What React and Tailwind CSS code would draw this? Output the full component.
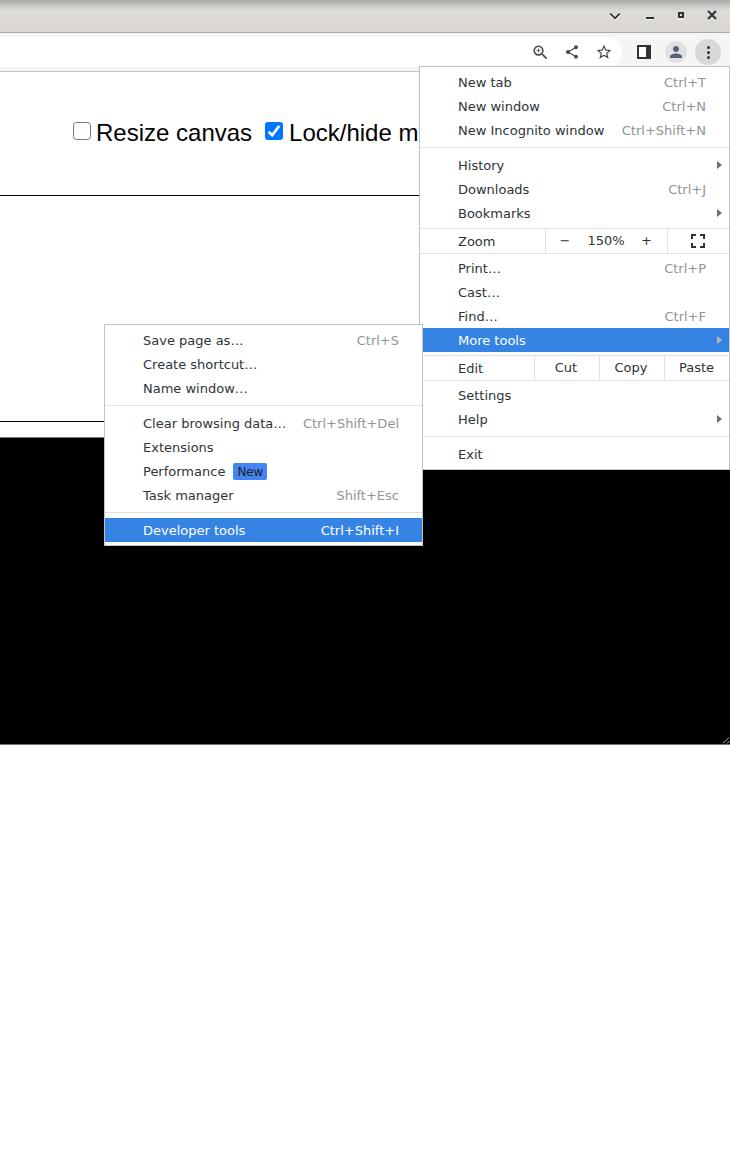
import React from "react";
import { MdZoomIn, MdShare, MdStarBorder, MdPerson } from "react-icons/md";

function Row({ label, shortcut, arrow, active, badge }) {
  return (
    <div
      className={`flex h-6 shrink-0 items-center pl-[38px] leading-[22px] ${
        active ? "bg-[#3584e4] text-white" : "text-[#2e3436]"
      }`}
    >
      <span className="pt-[2px]">{label}</span>
      {badge && (
        <span className="ml-2 h-[17px] rounded-[2px] bg-[#4285f4] px-1 text-[12px] leading-[18px] tracking-[-0.1px] text-[#202124]">
          {badge}
        </span>
      )}
      {shortcut && (
        <span className={`ml-auto pt-[2px] pr-[23px] ${active ? "text-white" : "text-[#929595]"}`}>{shortcut}</span>
      )}
      {arrow && (
        <svg className={`mr-[7px] ml-auto h-2 w-[5px] ${active ? "text-[#b8b6b4]" : "text-[#6a7070]"}`} viewBox="0 0 5 8">
          <path d="M0 0 5 4 0 8Z" fill="currentColor" />
        </svg>
      )}
    </div>
  );
}

function Separator() {
  return (
    <div className="h-[11px] shrink-0 pt-[5px]">
      <div className="h-px bg-[#e1e1e1]" />
    </div>
  );
}

function SplitRow({ label, children }) {
  return (
    <div className="mt-[3px] mb-[2px] flex h-[26px] shrink-0 border-y border-[#e1e1e1] leading-[26px]">
      <span className="flex-1 pl-[38px]">{label}</span>
      {children}
    </div>
  );
}

function WindowBar() {
  return (
    <div className="flex h-[33px] items-center justify-end border-b border-[#aaa9a7] bg-[linear-gradient(to_bottom,#a9a8a5_0px,#c5c3c0_5px,#dedad7_11px,#dad6d2_32px)] text-[#2e3436]">
      <svg className="h-[33px] w-[130px]" viewBox="0 0 130 33" fill="none" stroke="currentColor">
        <g stroke="#f6f5f4" strokeWidth="1.5" transform="translate(0 1)">
          <path d="M10 14 15 18.6 20 14M46 18h8M77 18h6M107.5 19l8-8M107.5 11l8 8" transform="translate(0 .3)" />
        </g>
        <path d="M10.3 13.6 15 18.3 19.7 13.6" strokeWidth="1.8" />
        <path d="M46 18h8" strokeWidth="2" />
        <path d="M79 13h4v4h-4z" strokeWidth="2" />
        <path d="m108 11 8 8M116 11l-8 8" strokeWidth="2.2" />
      </svg>
    </div>
  );
}

function Toolbar() {
  return (
    <div className="flex h-[39px] border-b border-[#c5c2bc] bg-[#f6f5f4] pt-1 text-[#4a4a4a]">
      <div className="flex h-[30px] w-[622px] items-center justify-end rounded-r-[15px] bg-white pr-[9px]">
        <MdZoomIn className="mr-[14px] size-[19px]" />
        <MdShare className="mr-[15px] size-[16px]" />
        <MdStarBorder className="size-[18px]" />
      </div>
      <svg className="mt-2 ml-[15px] h-[14px] w-[14px]" viewBox="0 0 14 14">
        <path d="M0 0h14v14H0z" fill="#2e3436" />
        <path d="M2 2h7v10H2z" fill="#fff" />
      </svg>
      <div className="mt-1 ml-[14px] flex size-[22px] items-center justify-center rounded-full bg-[#dee1e6] text-[#56606f]">
        <MdPerson className="size-[18px]" />
      </div>
      <div className="mt-[2px] ml-2 flex size-[26px] flex-col items-center justify-center gap-[2px] rounded-full bg-[#d9d8d7]">
        <i className="size-[3px] rounded-full bg-[#2e3436]" />
        <i className="size-[3px] rounded-full bg-[#2e3436]" />
        <i className="size-[3px] rounded-full bg-[#2e3436]" />
      </div>
    </div>
  );
}

function MainMenu() {
  return (
    <div className="absolute top-[66px] left-[419px] flex h-[404px] w-[311px] flex-col border border-[#c5c1bd] bg-white py-[3px] font-['DejaVu_Sans',sans-serif] text-[13px] text-[#2e3436]">
      <Row label="New tab" shortcut="Ctrl+T" />
      <Row label="New window" shortcut="Ctrl+N" />
      <Row label="New Incognito window" shortcut="Ctrl+Shift+N" />
      <Separator />
      <Row label="History" arrow />
      <Row label="Downloads" shortcut="Ctrl+J" />
      <Row label="Bookmarks" arrow />
      <SplitRow label="Zoom">
        <div className="flex w-[122px] border-l border-[#e1e1e1] leading-[24px]">
          <span className="w-[38px] text-center">−</span>
          <span className="w-[44px] text-center">150%</span>
          <span className="w-[37px] text-center">+</span>
        </div>
        <div className="flex w-[62px] items-center justify-center border-l border-[#e1e1e1] pr-[2px]">
          <svg className="size-[14px]" viewBox="0 0 14 14" fill="none" stroke="#2e3436" strokeWidth="2">
            <path d="M1 5V1h4M9 1h4v4M13 9v4H9M5 13H1V9" />
          </svg>
        </div>
      </SplitRow>
      <Row label="Print…" shortcut="Ctrl+P" />
      <Row label="Cast…" />
      <Row label="Find…" shortcut="Ctrl+F" />
      <Row label="More tools" arrow active />
      <SplitRow label="Edit">
        <span className="w-[65px] border-l border-[#e1e1e1] pr-[2px] text-center leading-[24px]">Cut</span>
        <span className="w-[65px] border-l border-[#e1e1e1] pr-[2px] text-center leading-[24px]">Copy</span>
        <span className="w-[65px] border-l border-[#e1e1e1] pr-px text-center leading-[24px]">Paste</span>
      </SplitRow>
      <Row label="Settings" />
      <Row label="Help" arrow />
      <Separator />
      <Row label="Exit" />
    </div>
  );
}

function ToolsMenu() {
  return (
    <div className="absolute top-[324px] left-[104px] flex h-[222px] w-[319px] flex-col border border-[#c5c1bd] bg-white py-[3px] font-['DejaVu_Sans',sans-serif] text-[13px]">
      <Row label="Save page as…" shortcut="Ctrl+S" />
      <Row label="Create shortcut…" />
      <Row label="Name window…" />
      <Separator />
      <Row label="Clear browsing data…" shortcut="Ctrl+Shift+Del" />
      <Row label="Extensions" />
      <Row label="Performance" badge="New" />
      <Row label="Task manager" shortcut="Shift+Esc" />
      <Separator />
      <Row label="Developer tools" shortcut="Ctrl+Shift+I" active />
    </div>
  );
}

export default function App() {
  return (
    <div className="relative h-[1168px] w-[730px] overflow-hidden bg-white font-['Liberation_Sans',sans-serif]">
      <WindowBar />
      <Toolbar />
      <div className="flex h-[124px] items-start border-b border-black pt-[46px] pl-[73px] text-[24px] leading-[30px] whitespace-nowrap text-black">
        <span className="mt-1 mr-[5px] size-[18px] shrink-0 rounded-[3.5px] border-[1.5px] border-[#767676] bg-white" />
        <span>Resize canvas</span>
        <span className="mt-1 mr-[6px] ml-[13px] size-[18px] shrink-0 rounded-[3px] bg-[#0075ff]">
          <svg className="size-[18px]" viewBox="0 0 18 18" fill="none" stroke="#fff" strokeWidth="2.6">
            <path d="m3.6 9.8 3.6 3.5 7-9.4" />
          </svg>
        </span>
        <span>Lock/hide m</span>
      </div>
      <div className="h-[226px] border-b border-black" />
      <div className="mt-[15px] flex h-[308px] items-end justify-end border-y border-[#767676] bg-black">
        <svg className="h-[7px] w-[7px]" viewBox="0 0 7 7" stroke="#b5b5b5" strokeWidth="1">
          <path d="M0 6.5 6 .5M4 6.5 6.5 4" />
        </svg>
      </div>
      <MainMenu />
      <ToolsMenu />
    </div>
  );
}
